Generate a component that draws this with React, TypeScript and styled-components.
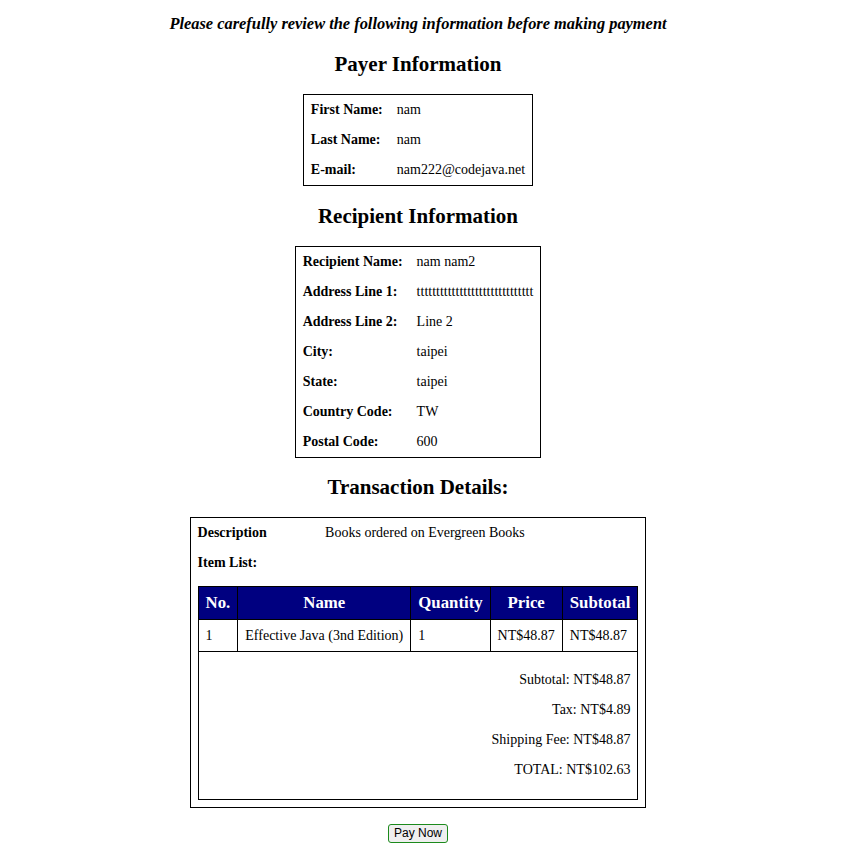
import React from 'react'
import styled, { createGlobalStyle } from 'styled-components'

const GlobalStyle = createGlobalStyle`
    body {
        margin: 0 8px 8px;
        font-family: "Liberation Serif", "Times New Roman", serif;
        font-size: 14px;
        color: #000;
        background: #fff;
    }
`;

const Page = styled.div`
    text-align: center;
    padding-right: 22px;
`;

const Intro = styled.h3`
    font-size: 16.4px;
    font-style: italic;
    font-weight: bold;
    margin: 14px 0 18px;
`;

const SectionTitle = styled.h2`
    font-size: 21px;
    font-weight: bold;
    margin: 17.5px 0 17px;
`;

const InfoTable = styled.table`
    margin: 0 auto;
    border: 1px solid #000;
    border-spacing: 0;
    text-align: left;
    font-size: 14px;
`;

const Label = styled.td`
    font-weight: bold;
    padding: 6px 7px;
    line-height: 18px;
    vertical-align: middle;
`;

const Value = styled.td`
    padding: 6px 7px;
    line-height: 18px;
    white-space: nowrap;
`;

const FullCell = styled.td`
    padding: 8px 7px 7px;
`;

const ItemTable = styled.table`
    border-collapse: collapse;
    border: 1px solid #000;
`;

const HeadCell = styled.th`
    background: #000080;
    color: #fff;
    font-size: 16.8px;
    font-weight: bold;
    text-align: center;
    border: 1px solid #000;
    padding: 7px;
    line-height: 18px;
`;

const ItemCell = styled.td`
    border: 1px solid #000;
    padding: 7px;
    line-height: 17px;
    text-align: left;
    white-space: nowrap;
`;

const TotalsCell = styled.td`
    border: 1px solid #000;
    padding: 13px 7px 14px;
`;

const TotalLine = styled.div`
    text-align: right;
    line-height: 18px;
    padding: 6px 0;
`;

const ButtonRow = styled.div`
    margin-top: 16px;
`;

const PayButton = styled.button`
    font-family: Arial, "Liberation Sans", sans-serif;
    font-size: 12px;
    line-height: 15px;
    padding: 1px 5px;
    border: 1px solid #1c8a1c;
    border-radius: 3px;
    background: #efefef;
    color: #000;
    cursor: pointer;
`;

const payer = [
    ['First Name:', 'nam'],
    ['Last Name:', 'nam'],
    ['E-mail:', 'nam222@codejava.net'],
];

const recipient = [
    ['Recipient Name:', 'nam nam2'],
    ['Address Line 1:', 't'.repeat(30)],
    ['Address Line 2:', 'Line 2'],
    ['City:', 'taipei'],
    ['State:', 'taipei'],
    ['Country Code:', 'TW'],
    ['Postal Code:', '600'],
];

const totals = [
    'Subtotal: NT$48.87',
    'Tax: NT$4.89',
    'Shipping Fee: NT$48.87',
    'TOTAL: NT$102.63',
];

const InfoRows: React.FC<{ rows: string[][] }> = ({ rows }) => (
    <InfoTable>
        <tbody>
            {rows.map(([label, value]) => (
                <tr key={label}>
                    <Label>{label}</Label>
                    <Value>{value}</Value>
                </tr>
            ))}
        </tbody>
    </InfoTable>
);

export default function App() {
    return (
        <Page>
            <GlobalStyle />
            <Intro>Please carefully review the following information before making payment</Intro>

            <SectionTitle>Payer Information</SectionTitle>
            <InfoRows rows={payer} />

            <SectionTitle>Recipient Information</SectionTitle>
            <InfoRows rows={recipient} />

            <SectionTitle>Transaction Details:</SectionTitle>
            <InfoTable>
                <tbody>
                    <tr>
                        <Label>Description</Label>
                        <Value>Books ordered on Evergreen Books</Value>
                    </tr>
                    <tr>
                        <Label colSpan={2}>Item List:</Label>
                    </tr>
                    <tr>
                        <FullCell colSpan={2}>
                            <ItemTable>
                                <thead>
                                    <tr>
                                        <HeadCell>No.</HeadCell>
                                        <HeadCell>Name</HeadCell>
                                        <HeadCell>Quantity</HeadCell>
                                        <HeadCell>Price</HeadCell>
                                        <HeadCell>Subtotal</HeadCell>
                                    </tr>
                                </thead>
                                <tbody>
                                    <tr>
                                        <ItemCell>1</ItemCell>
                                        <ItemCell>Effective Java (3nd Edition)</ItemCell>
                                        <ItemCell>1</ItemCell>
                                        <ItemCell>NT$48.87</ItemCell>
                                        <ItemCell>NT$48.87</ItemCell>
                                    </tr>
                                    <tr>
                                        <TotalsCell colSpan={5}>
                                            {totals.map(t => (
                                                <TotalLine key={t}>{t}</TotalLine>
                                            ))}
                                        </TotalsCell>
                                    </tr>
                                </tbody>
                            </ItemTable>
                        </FullCell>
                    </tr>
                </tbody>
            </InfoTable>

            <ButtonRow>
                <PayButton type="button">Pay Now</PayButton>
            </ButtonRow>
        </Page>
    );
}
